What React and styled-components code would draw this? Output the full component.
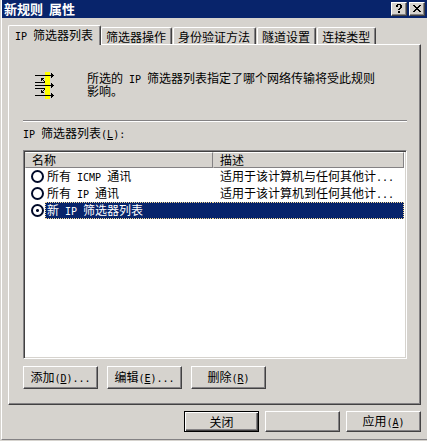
import React, { useState } from 'react';
import styled, { createGlobalStyle } from 'styled-components';

const GlobalStyle = createGlobalStyle`
  :root {
    --face: #d6d3ce;
    --navy: #08246b;
    --shadow: #848284;
    --dark: #424142;
  }

  * {
    box-sizing: border-box;
  }

  body {
    margin: 0;
    background: var(--face);
    color: #000;
  }

  body,
  button,
  table {
    font-family: 'Noto Sans CJK SC', sans-serif;
    font-size: 12px;
    line-height: 12px;
  }
`;

const Window = styled.main`
  margin-left: 1px;
  border-left: 1px solid #fff;
  border-bottom: 1px solid var(--shadow);
`;

const TitleBar = styled.header`
  display: flex;
  align-items: center;
  gap: 2px;
  height: 18px;
  padding: 0 2px;
  background: var(--navy);
  color: #fff;

  > h1 {
    flex: 1;
    margin: 0;
    font-size: 13px;
    line-height: 18px;
    font-weight: 700;
  }
`;

// Half-width characters, set on a 6px cell
const Latin = styled.span`
  font-family: 'DejaVu Sans Mono', monospace;
  font-size: 10px;
  line-height: 10px;
  white-space: pre-wrap;
`;

const BaseButton = styled.button`
  padding: 0;
  background: var(--face);
  color: #000;
  border: 1px solid;
  border-color: #fff var(--dark) var(--dark) #fff;
  box-shadow: inset -1px -1px 0 var(--shadow);
`;

const CaptionButton = styled(BaseButton)`
  display: flex;
  align-items: center;
  justify-content: center;
  width: 16px;
  height: 14px;
`;

const PushButton = styled(BaseButton)`
  width: 75px;
  height: ${({ $small }) => ($small ? '21px' : '23px')};
  ${({ $primary }) =>
    $primary &&
    `
    border-color: #000;
    box-shadow: inset 1px 1px 0 #fff, inset -1px -1px 0 var(--dark),
      inset -2px -2px 0 var(--shadow);
  `}
`;

const Content = styled.div`
  padding: 7px 6px;
`;

const TabList = styled.div`
  display: flex;
  align-items: flex-end;
`;

const Tab = styled.button`
  height: ${({ $active }) => ($active ? '20px' : '17px')};
  margin-bottom: ${({ $active }) => ($active ? '-1px' : '0')};
  padding: ${({ $active }) => ($active ? '0 7px 0 6px' : '1px 5px 0 4px')};
  background: var(--face);
  color: #000;
  border: 1px solid;
  border-color: #fff var(--dark) transparent #fff;
  border-bottom: none;
  border-radius: 2px 2px 0 0;
  box-shadow: inset -1px 0 0 var(--shadow);
  white-space: nowrap;

  & + & {
    margin-right: 1px;
  }
`;

const Panel = styled.section`
  padding: 27px 13px 15px 14px;
  border: 1px solid;
  border-color: #fff var(--dark) var(--dark) #fff;
  box-shadow: inset -1px -1px 0 var(--shadow);
`;

const Intro = styled.div`
  display: flex;
  gap: 32px;
  padding: 0 30px 0 12px;
  margin-bottom: 20px;

  > svg {
    flex: none;
  }

  > p {
    margin: 0;
  }
`;

const Divider = styled.hr`
  height: 2px;
  margin: 0 0 5px;
  border: none;
  border-top: 1px solid var(--shadow);
  border-bottom: 1px solid #fff;
`;

const ListLabel = styled.div`
  margin-bottom: 10px;
`;

const ListBox = styled.div`
  height: 209px;
  background: #fff;
  border: 1px solid;
  border-color: var(--shadow) #fff #fff var(--shadow);
  box-shadow: inset 1px 1px 0 var(--dark), inset -1px -1px 0 var(--face);
  padding: 1px 2px 1px 1px;
`;

const Table = styled.table`
  width: 100%;
  table-layout: fixed;
  border-collapse: separate;
  border-spacing: 0;
`;

const HeadCell = styled.th`
  height: 16px;
  width: ${({ $width }) => $width || 'auto'};
  padding: 0 6px;
  background: var(--face);
  border: 1px solid;
  border-color: #fff var(--shadow) var(--shadow) var(--face);
  font-weight: 400;
  text-align: left;
`;

const Cell = styled.td`
  height: 17px;
  padding: ${({ $name }) => ($name ? '0 0 0 6px' : '0')};
`;

const NameCell = styled.div`
  display: flex;
  align-items: center;
  gap: 1px;
`;

const selection = ({ $selected }) =>
  $selected &&
  `
  background: var(--navy);
  color: #fff;
  border-color: #f7db94;
`;

const NameLabel = styled.label`
  flex: 1;
  height: 17px;
  padding: 1px;
  border: 1px dotted transparent;
  border-right: none;
  ${selection}
`;

const Description = styled.div`
  height: 17px;
  padding: 1px 7px;
  border: 1px dotted transparent;
  border-left: none;
  white-space: nowrap;
  ${selection}
`;

const Radio = styled.input`
  appearance: none;
  flex: none;
  width: 13px;
  height: 13px;
  margin: 0;
  border: 2px solid #000a29;
  border-radius: 50%;
  background: #fff;

  &:checked {
    background: radial-gradient(circle, #000a29 0 1px, #fff 2px);
  }
`;

const ListActions = styled.div`
  display: flex;
  gap: 9px;
  margin-top: 7px;
`;

const Footer = styled.footer`
  display: flex;
  justify-content: flex-end;
  gap: 6px;
  margin-top: 6px;
`;

const filters = [
  { id: 'icmp', name: <>所有<Latin> ICMP </Latin>通讯</>, info: '适用于该计算机与任何其他计' },
  { id: 'ip', name: <>所有<Latin> IP </Latin>通讯</>, info: '适用于该计算机到任何其他计' },
  { id: 'new', name: <>新<Latin> IP </Latin>筛选器列表</>, info: '' },
];

const tabs = ['筛选器操作', '身份验证方法', '隧道设置', '连接类型'];

const Key = ({ letter, after }) => (
  <Latin>
    (<u>{letter}</u>){after}
  </Latin>
);

const FilterIcon = () => (
  <svg width="20" height="28" viewBox="0 0 20 28" shapeRendering="crispEdges">
    <path d="M10 0h5v27h-5z" fill="#ff0" />
    <path
      d="M0 3h16v1H0zM0 13h16v1H0zM0 23h16v1H0zM0 10h10v1H0zM0 16h10v1H0z"
      fill="#000"
    />
    <path
      d="M16 1h1v1h1v1h1v1h-1v1h-1v1h-1zM16 11h1v1h1v1h1v1h-1v1h-1v1h-1zM16 21h1v1h1v1h1v1h-1v1h-1v1h-1z"
      fill="#000"
    />
    <path
      d="M6 6h3v1H8v1h1v1h1v1H9V9H8V8H7v1H6zM6 21h3v-1H8v-1h1v-1h1v-1H9v1H8v1H7v-1H6z"
      fill="#000"
    />
  </svg>
);

const App = () => {
  const [selected, setSelected] = useState('new');

  return (
    <>
      <GlobalStyle />
      <Window>
        <TitleBar>
          <h1>
            新规则<Latin> </Latin>属性
          </h1>
          <CaptionButton aria-label="帮助">
            <svg width="8" height="10" viewBox="0 0 8 10" shapeRendering="crispEdges">
              <path d="M2 0h4v1h1v3H6v1H5v1H3V5h1V4h1V1H3v2H1V1h1zM3 7h2v2H3z" />
            </svg>
          </CaptionButton>
          <CaptionButton aria-label="关闭窗口">
            <svg width="8" height="8" viewBox="0 0 8 8" shapeRendering="crispEdges">
              <path d="M0 0h2v1h1v1h2V1h1V0h2v1H7v1H6v1H5v1h1v1h1v1h1v1H6V6H5V5H3v1H2v1H0V6h1V5h1V4h1V3H2V2H1V1H0z" />
            </svg>
          </CaptionButton>
        </TitleBar>

        <Content>
          <TabList role="tablist">
            <Tab role="tab" aria-selected="true" $active>
              <Latin>IP </Latin>筛选器列表
            </Tab>
            {tabs.map((tab) => (
              <Tab key={tab} role="tab" aria-selected="false">
                {tab}
              </Tab>
            ))}
          </TabList>

          <Panel role="tabpanel">
            <Intro>
              <FilterIcon />
              <p>
                所选的<Latin> IP </Latin>筛选器列表指定了哪个网络传输将受此规则影响。
              </p>
            </Intro>
            <Divider />
            <ListLabel id="list-label">
              <Latin>IP </Latin>筛选器列表
              <Key letter="L" after=":" />
            </ListLabel>
            <ListBox>
              <Table aria-labelledby="list-label">
                <thead>
                  <tr>
                    <HeadCell $width="188px">名称</HeadCell>
                    <HeadCell>描述</HeadCell>
                  </tr>
                </thead>
                <tbody>
                  {filters.map(({ id, name, info }) => (
                    <tr key={id}>
                      <Cell $name>
                        <NameCell>
                          <Radio
                            type="radio"
                            name="filter"
                            id={id}
                            checked={selected === id}
                            onChange={() => setSelected(id)}
                          />
                          <NameLabel htmlFor={id} $selected={selected === id}>
                            {name}
                          </NameLabel>
                        </NameCell>
                      </Cell>
                      <Cell>
                        <Description $selected={selected === id}>
                          {info}
                          {info && <Latin>...</Latin>}
                        </Description>
                      </Cell>
                    </tr>
                  ))}
                </tbody>
              </Table>
            </ListBox>
            <ListActions>
              <PushButton>
                添加
                <Key letter="D" after="..." />
              </PushButton>
              <PushButton>
                编辑
                <Key letter="E" after="..." />
              </PushButton>
              <PushButton>
                删除
                <Key letter="R" />
              </PushButton>
            </ListActions>
          </Panel>

          <Footer>
            <PushButton $small $primary>
              关闭
            </PushButton>
            <PushButton $small aria-label="取消" />
            <PushButton $small>
              应用
              <Key letter="A" />
            </PushButton>
          </Footer>
        </Content>
      </Window>
    </>
  );
};

export default App;
